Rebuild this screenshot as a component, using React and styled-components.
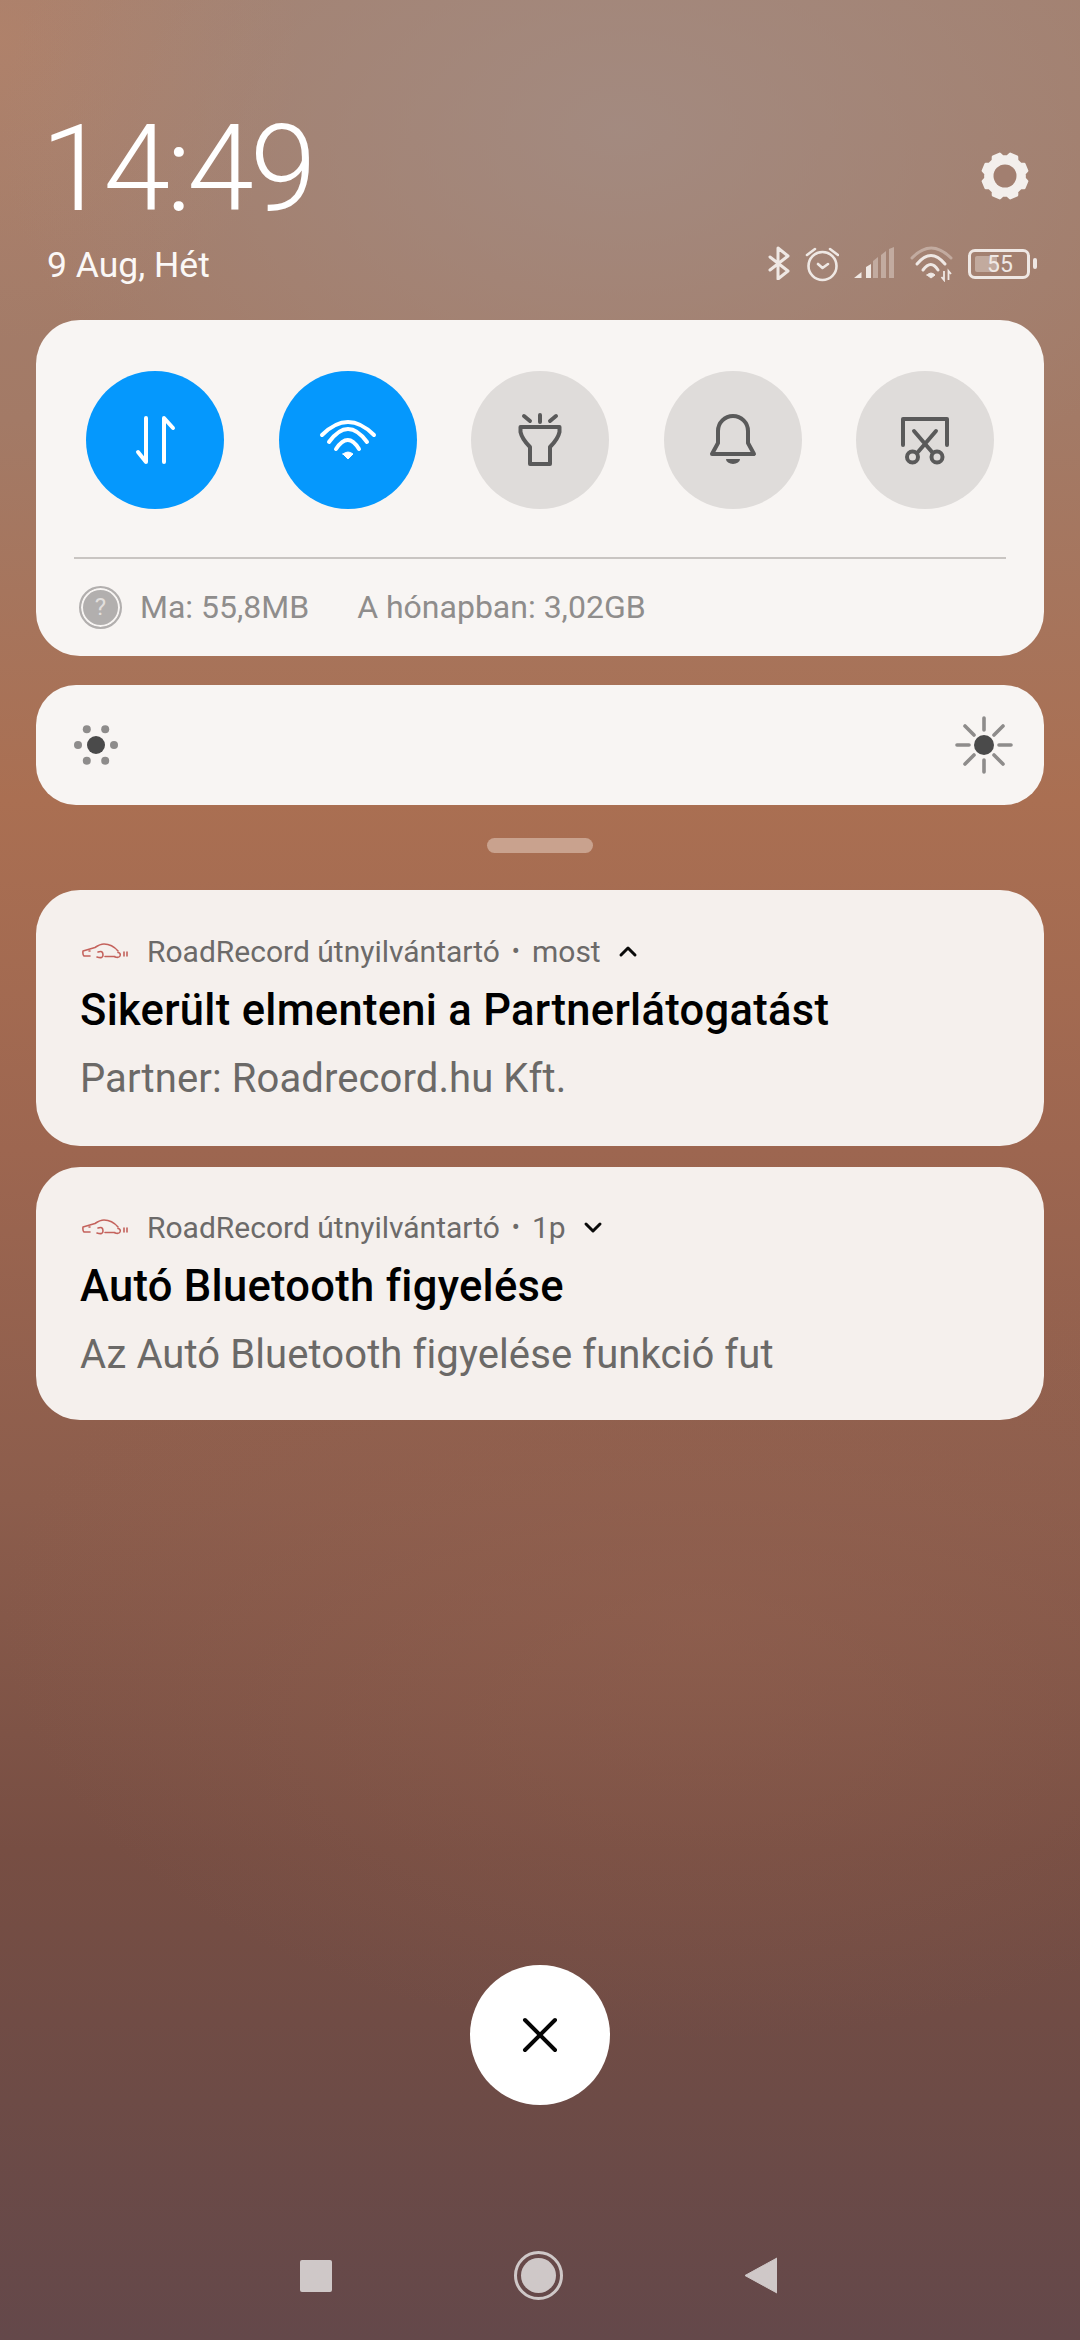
import React from 'react';
import styled, { createGlobalStyle } from 'styled-components';

const GlobalStyle = createGlobalStyle`
  html, body {
    margin: 0;
    padding: 0;
    background: #6b4c48;
  }
  * {
    box-sizing: border-box;
  }
`;

const BLUE = '#0598fd';
const GREY = '#dfdcda';
const DARK = '#5a5a5a';
const STATUS = '#efe8e4';

// ---- layout ----
const Page = styled.div`
  width: 1080px;
  height: 2340px;
  padding: 0 36px;
  display: flex;
  flex-direction: column;
  font-family: Roboto, 'Noto Sans', sans-serif;
  overflow: hidden;
  background:
    radial-gradient(ellipse 620px 420px at 620px 130px, rgba(163, 142, 134, 0.75), rgba(163, 142, 134, 0) 100%),
    radial-gradient(ellipse 300px 300px at 0px 40px, rgba(180, 130, 105, 0.7), rgba(180, 130, 105, 0) 100%),
    radial-gradient(ellipse 700px 420px at 700px 1620px, rgba(150, 100, 82, 0.45), rgba(150, 100, 82, 0) 100%),
    linear-gradient(180deg, #a3806f 0px, #a37a66 420px, #aa6f52 800px, #9d6650 1150px, #8c5d4c 1500px, #774e43 1850px, #6d4b46 2100px, #64484a 2340px);
`;

const Header = styled.header`
  height: 320px;
  padding: 109px 8px 0 10px;
`;

const TopRow = styled.div`
  display: flex;
  justify-content: space-between;
  align-items: flex-start;
`;

const Clock = styled.div`
  margin-left: -5px;
  font-size: 120px;
  line-height: 120px;
  font-weight: 300;
  letter-spacing: -4px;
  color: #fff;
`;

const GearWrap = styled.div`
  margin: 43px 7px 0 0;
  height: 48px;
`;

const BottomRow = styled.div`
  display: flex;
  justify-content: space-between;
  align-items: flex-start;
  margin-top: 17px;
`;

const DateText = styled.div`
  margin: -1px 0 0 1px;
  font-size: 35.5px;
  line-height: 40px;
  color: #fbf8f6;
`;

const StatusIcons = styled.div`
  display: flex;
  align-items: flex-start;
  gap: 15px;
  height: 36px;
`;

const Battery = styled.div`
  position: relative;
  width: 62px;
  height: 30px;
  margin: 3px 6px 0 0;
  border: 3px solid ${STATUS};
  border-radius: 7px;
  display: flex;
  align-items: center;
  justify-content: center;
  font-size: 23px;
  color: ${STATUS};
  &::before {
    content: '';
    position: absolute;
    left: 4px;
    top: 4px;
    bottom: 4px;
    width: 22px;
    background: rgba(239, 232, 228, 0.4);
    border-radius: 2px;
  }
  &::after {
    content: '';
    position: absolute;
    right: -10px;
    top: 6px;
    width: 4px;
    height: 11px;
    background: ${STATUS};
    border-radius: 2px;
  }
`;

const BatteryLevel = styled.span`
  position: relative;
  left: 1px;
`;

const Panel = styled.section`
  background: #f8f5f3;
  border-radius: 44px;
`;

const QuickPanel = styled(Panel)`
  height: 336px;
  padding: 51px 50px 0;
`;

const Toggles = styled.div`
  display: flex;
  justify-content: space-between;
`;

const Toggle = styled.div`
  width: 138px;
  height: 138px;
  border-radius: 50%;
  background: ${(p) => (p.$on ? BLUE : GREY)};
  svg {
    display: block;
  }
`;

const Divider = styled.div`
  height: 2px;
  margin: 48px -12px 0;
  background: #c9c5c2;
`;

const Usage = styled.div`
  display: flex;
  align-items: center;
  margin: 26px 0 0 -7px;
  font-size: 32px;
  line-height: 44px;
  color: #8f8d8c;
`;

const Unknown = styled.div`
  width: 43px;
  height: 43px;
  margin-right: 18px;
  border-radius: 50%;
  background: #b2afae;
  border: 2px solid #b2afae;
  box-shadow: inset 0 0 0 2px #f8f5f3;
  display: flex;
  align-items: center;
  justify-content: center;
  font-size: 24px;
  color: #e2dfdd;
`;

const Month = styled.span`
  margin-left: 48px;
`;

const BrightnessPanel = styled(Panel)`
  height: 120px;
  margin-top: 29px;
  padding: 0 30px 0 38px;
  border-radius: 40px;
  display: flex;
  align-items: center;
  justify-content: space-between;
`;

const Handle = styled.div`
  width: 106px;
  height: 15px;
  margin: 33px auto 37px;
  border-radius: 8px;
  background: #c9a28e;
`;

const Notification = styled.article`
  background: #f5f0ed;
  border-radius: 44px;
  padding: ${(p) => (p.$compact ? '42px 44px 42px' : '43px 44px 44px')};
  & + & {
    margin-top: 21px;
  }
`;

const NoteHead = styled.div`
  display: flex;
  align-items: center;
  height: 36px;
  font-size: 30px;
  color: #6c6a69;
`;

const AppIcon = styled.svg`
  width: 46px;
  height: 16px;
  margin: 0 19px 0 2px;
`;

const Dot = styled.span`
  margin: 0 12px;
  font-size: 24px;
`;

const Chevron = styled.svg`
  width: 22px;
  height: 14px;
  margin-left: 16px;
`;

const NoteTitle = styled.div`
  margin-top: 17px;
  font-size: 43.5px;
  line-height: 50px;
  font-weight: 500;
  letter-spacing: 0.3px;
  color: #000;
`;

const NoteBody = styled.div`
  margin-top: 20px;
  font-size: 40px;
  line-height: 46px;
  letter-spacing: 0.1px;
  color: #6b6967;
`;

const Close = styled.div`
  width: 140px;
  height: 140px;
  margin: auto auto 146px;
  border-radius: 50%;
  background: #fff;
  display: flex;
  align-items: center;
  justify-content: center;
`;

const NavBar = styled.nav`
  display: flex;
  align-items: center;
  justify-content: space-between;
  padding: 0 267px 40px 264px;
`;

const NavSquare = styled.div`
  width: 32px;
  height: 32px;
  border-radius: 2px;
  background: #cfc8c8;
`;

const NavHome = styled.div`
  width: 49px;
  height: 49px;
  border-radius: 50%;
  border: 3px solid #cfc8c8;
  padding: 4px;
  &::after {
    content: '';
    display: block;
    width: 100%;
    height: 100%;
    border-radius: 50%;
    background: #cfc8c8;
  }
`;

// ---- icons ----
const gearPath = () => {
  const pt = (r, deg) => {
    const a = (deg * Math.PI) / 180;
    return `${(24 + r * Math.cos(a)).toFixed(2)} ${(24 + r * Math.sin(a)).toFixed(2)}`;
  };
  let d = '';
  for (let k = 0; k < 8; k++) {
    const a = 22.5 + 45 * k;
    d += `${k ? 'L' : 'M'}${pt(19.5, a - 15)} L${pt(22.5, a - 9)} L${pt(22.5, a + 9)} L${pt(19.5, a + 15)} `;
  }
  return d + 'Z';
};

const Gear = () => (
  <svg width="48" height="48" viewBox="0 0 48 48">
    <path d={gearPath()} fill="#f3efec" stroke="#f3efec" strokeWidth="3" strokeLinejoin="round" />
    <circle cx="24" cy="24" r="11.5" fill="#a27f70" />
  </svg>
);

const Bluetooth = () => (
  <svg width="22" height="34" viewBox="0 0 22 34" fill="none" stroke={STATUS} strokeWidth="3" strokeLinecap="round" strokeLinejoin="round">
    <path d="M2 11 L20 25 L10 33 V2 L20 10 L2 24" />
  </svg>
);

const Alarm = () => (
  <svg width="34" height="36" viewBox="0 0 34 36" fill="none" stroke={STATUS} strokeWidth="2.6" strokeLinecap="round" strokeLinejoin="round">
    <circle cx="17.5" cy="20" r="14" />
    <path d="M2 9 L10 3 M25 3 L33 9 M13 18 L17.5 22 L23 18" />
  </svg>
);

const Signal = () => (
  <svg width="40" height="36" viewBox="0 0 40 36" fill={STATUS}>
    <path d="M0 32 L7.5 26 V32 Z M12 21 L17 18 V32 H12 Z" />
    <path opacity="0.4" d="M19 15 L24 11 V32 H19 Z M27 9 L32 5 V32 H27 Z" />
    <path opacity="0.4" d="M35 3 L40 1 V32 H35 Z" />
  </svg>
);

const StatusWifi = () => (
  <svg width="44" height="36" viewBox="0 0 44 36" fill="none" stroke={STATUS} strokeWidth="3" strokeLinecap="round">
    <path opacity="0.4" d="M3 12 Q22 -8 42 12" />
    <path d="M8 18 Q22 1 36 18" />
    <path d="M14 24 Q22 13 29 24" />
    <path d="M18 29 L22 32 L26 29 Q22 25 18 29 Z" fill={STATUS} strokeWidth="1" />
    <path strokeWidth="1.8" strokeLinecap="butt" d="M35 25 V34 L32.5 31 M39.5 34 V25 L42 28" />
  </svg>
);

const Arrows = () => (
  <svg width="138" height="138" viewBox="0 0 138 138" fill="none" stroke="#fff" strokeWidth="4" strokeLinecap="round" strokeLinejoin="round">
    <path d="M60 47 V91 L52 81" />
    <path d="M78 91 V47 L87 57" />
  </svg>
);

const Wifi = () => (
  <svg width="138" height="138" viewBox="0 0 138 138" fill="none" stroke="#fff" strokeWidth="4" strokeLinecap="round">
    <path d="M43 64 Q69 38 95 64" />
    <path d="M50 71 Q69 45 88 71" />
    <path d="M57 78 Q69 60 80 78" />
    <path d="M64 83 L69 88 L74 83 Q69 79 64 83 Z" fill="#fff" strokeWidth="1" />
  </svg>
);

const Torch = () => (
  <svg width="138" height="138" viewBox="0 0 138 138" fill="none" stroke={DARK} strokeWidth="4" strokeLinecap="round" strokeLinejoin="round">
    <path d="M69 44 V51 M53 45 L59 50 M85 45 L79 50" />
    <path d="M49.5 56 H88.5 V61 Q87 68 79 76 V93 H59 V76 Q51 68 49.5 61 Z" />
  </svg>
);

const Bell = () => (
  <svg width="138" height="138" viewBox="0 0 138 138" fill="none" stroke={DARK} strokeWidth="4" strokeLinecap="round" strokeLinejoin="round">
    <path d="M48 83 L54 72 V60 A15 15 0 0 1 84 60 V72 L90 83 Z" />
    <path d="M62 88 H76 A7 5 0 0 1 62 88 Z" fill={DARK} stroke="none" />
  </svg>
);

const Screenshot = () => (
  <svg width="138" height="138" viewBox="0 0 138 138" fill="none" stroke={DARK} strokeWidth="4" strokeLinecap="round" strokeLinejoin="round">
    <path d="M47 74 V48 H91 V74" />
    <path d="M58 60 L76 81 M80 60 L62 81" />
    <circle cx="56.5" cy="86" r="5.5" />
    <circle cx="81" cy="86" r="5.5" />
  </svg>
);

const SunLow = () => (
  <svg width="44" height="48" viewBox="-22 -24 44 48" fill="#8e8c8b">
    <circle r="9" fill="#4a4a4a" />
    <circle cx="-9.2" cy="-15.7" r="4" />
    <circle cx="9.2" cy="-15.7" r="4" />
    <circle cx="-18" r="4" />
    <circle cx="18" r="4" />
    <circle cx="-9.2" cy="15.7" r="4" />
    <circle cx="9.2" cy="15.7" r="4" />
  </svg>
);

const SunHigh = () => (
  <svg width="60" height="60" viewBox="-30 -30 60 60" fill="none" stroke="#8e8c8b" strokeWidth="3.6" strokeLinecap="round">
    <circle r="10" fill="#4a4a4a" stroke="none" />
    <path d="M0 -27 V-15 M0 15 V27 M-27 0 H-15 M15 0 H27 M-10 -10 L-19 -19 M10 -10 L19 -19 M-10 10 L-19 19 M10 10 L19 19" />
  </svg>
);

const CarIcon = () => (
  <AppIcon viewBox="0 0 46 16" fill="none" stroke="#c4625c" strokeWidth="1.6" strokeLinecap="round" strokeLinejoin="round">
    <path d="M8 13 L2 13 Q0.5 12 1 8 L13 4.5 Q18 1 22 1 Q30 1 36 8" />
    <path d="M16 9 Q21 7 21 12 Q21 16 15 14 M23 13.5 H33 M36 9.5 Q39 10 38 13 Q37 15 33 14 M42 9 V13 M45 9 V13 M7 8 H8" />
  </AppIcon>
);

const ChevronIcon = ({ up }) => (
  <Chevron viewBox="0 0 22 14" fill="none" stroke="#0a0a0a" strokeWidth="3" strokeLinecap="round" strokeLinejoin="round">
    <path d={up ? 'M4 11 L11 4 L18 11' : 'M4 4 L11 11 L18 4'} />
  </Chevron>
);

const notes = [
  { title: 'Sikerült elmenteni a Partnerlátogatást', body: 'Partner: Roadrecord.hu Kft.', when: 'most', up: true },
  { title: 'Autó Bluetooth figyelése', body: 'Az Autó Bluetooth figyelése funkció fut', when: '1p', compact: true },
];

const App = () => (
  <Page>
    <GlobalStyle />
    <Header>
      <TopRow>
        <Clock>14:49</Clock>
        <GearWrap>
          <Gear />
        </GearWrap>
      </TopRow>
      <BottomRow>
        <DateText>9 Aug, Hét</DateText>
        <StatusIcons>
          <Bluetooth />
          <Alarm />
          <Signal />
          <StatusWifi />
          <Battery>
            <BatteryLevel>55</BatteryLevel>
          </Battery>
        </StatusIcons>
      </BottomRow>
    </Header>

    <QuickPanel>
      <Toggles>
        <Toggle $on><Arrows /></Toggle>
        <Toggle $on><Wifi /></Toggle>
        <Toggle><Torch /></Toggle>
        <Toggle><Bell /></Toggle>
        <Toggle><Screenshot /></Toggle>
      </Toggles>
      <Divider />
      <Usage>
        <Unknown>?</Unknown>
        <span>Ma: 55,8MB</span>
        <Month>A hónapban: 3,02GB</Month>
      </Usage>
    </QuickPanel>

    <BrightnessPanel>
      <SunLow />
      <SunHigh />
    </BrightnessPanel>

    <Handle />

    {notes.map((n) => (
      <Notification key={n.when} $compact={n.compact}>
        <NoteHead>
          <CarIcon />
          <span>RoadRecord útnyilvántartó</span>
          <Dot>•</Dot>
          <span>{n.when}</span>
          <ChevronIcon up={n.up} />
        </NoteHead>
        <NoteTitle>{n.title}</NoteTitle>
        <NoteBody>{n.body}</NoteBody>
      </Notification>
    ))}

    <Close>
      <svg width="36" height="36" viewBox="0 0 36 36" fill="none" stroke="#050505" strokeWidth="4" strokeLinecap="round">
        <path d="M3 3 L33 33 M33 3 L3 33" />
      </svg>
    </Close>

    <NavBar>
      <NavSquare />
      <NavHome />
      <svg width="32" height="37" viewBox="0 0 32 37" fill="#cfc8c8">
        <path d="M32 1 V36 L0 18.5 Z" stroke="#cfc8c8" strokeWidth="1" strokeLinejoin="round" />
      </svg>
    </NavBar>
  </Page>
);

export default App;
